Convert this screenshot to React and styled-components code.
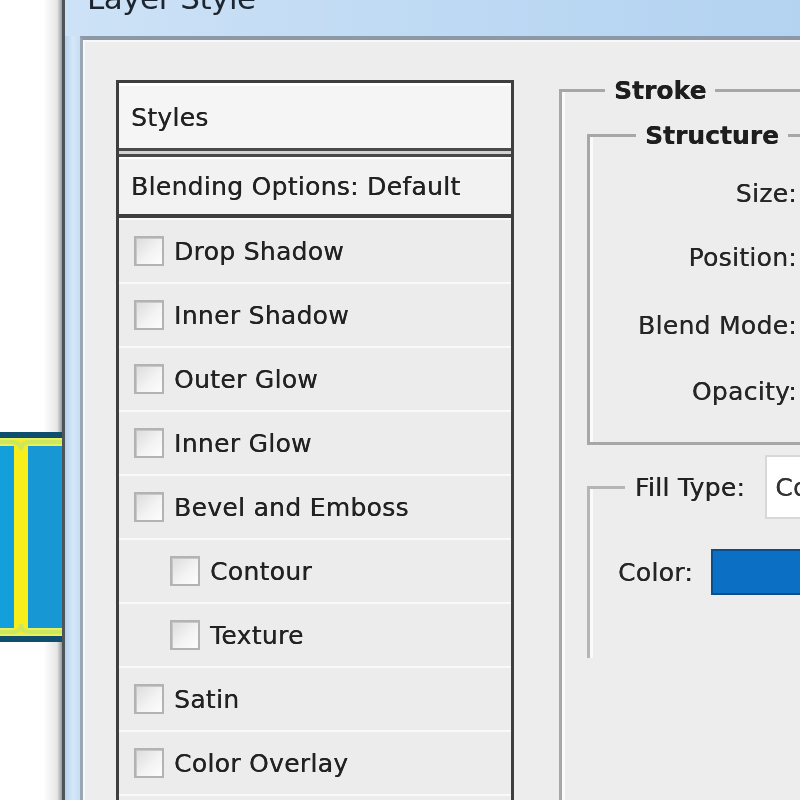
import React from 'react';
import styled, { createGlobalStyle } from 'styled-components';

const GlobalStyle = createGlobalStyle`
  html, body {
    margin: 0;
    padding: 0;
    background: #ffffff;
  }
  body {
    font-family: "DejaVu Sans", "Liberation Sans", sans-serif;
  }
`;

const effects = [
  { name: 'Drop Shadow' },
  { name: 'Inner Shadow' },
  { name: 'Outer Glow' },
  { name: 'Inner Glow' },
  { name: 'Bevel and Emboss' },
  { name: 'Contour', nested: true },
  { name: 'Texture', nested: true },
  { name: 'Satin' },
  { name: 'Color Overlay' },
];

const structureFields = [
  { label: 'Size:', height: 64 },
  { label: 'Position:', height: 64 },
  { label: 'Blend Mode:', height: 72 },
  { label: 'Opacity:', height: 60 },
];

const LayerThumb = () => (
  <svg width="62" height="210" viewBox="0 0 62 210">
    <rect x="0" y="0" width="62" height="210" fill="#0e4f6e" />
    <rect x="0" y="6" width="62" height="198" fill="#e8f05a" />
    <rect x="0" y="14" width="14" height="182" fill="#129fdc" />
    <rect x="28" y="14" width="34" height="182" fill="#1797d4" />
    <rect x="14" y="8" width="14" height="194" fill="#f7ee1c" />
    <path d="M0 10 H12 Q21 10 21 18 Q21 10 30 10 H62" stroke="#cde85e" strokeWidth="4" fill="none" />
    <path d="M0 200 H12 Q21 200 21 192 Q21 200 30 200 H62" stroke="#cde85e" strokeWidth="4" fill="none" />
  </svg>
);

const App = () => {
  return (
    <>
      <GlobalStyle />
      <Page>
        <Backdrop>
          <LayerThumb />
        </Backdrop>
        <Window>
          <TitleBar>
            <Title>Layer Style</Title>
          </TitleBar>
          <Body>
            <StylesPanel>
              <HeaderRow>Styles</HeaderRow>
              <DoubleRule />
              <BlendRow>Blending Options: Default</BlendRow>
              <Rule />
              {effects.map((fx) => (
                <EffectRow key={fx.name} $nested={fx.nested}>
                  <Checkbox />
                  <span>{fx.name}</span>
                </EffectRow>
              ))}
              <EffectRow />
            </StylesPanel>
            <RightColumn>
              <Group>
                <StrokeLegend>Stroke</StrokeLegend>
                <Structure>
                  <StructureLegend>Structure</StructureLegend>
                  {structureFields.map((f) => (
                    <FieldRow key={f.label} $height={f.height}>
                      {f.label}
                    </FieldRow>
                  ))}
                </Structure>
                <FillGroup>
                  <FillLegend>
                    <span>Fill Type:</span>
                    <Select>Co</Select>
                  </FillLegend>
                  <ColorRow>
                    <span>Color:</span>
                    <Swatch />
                  </ColorRow>
                </FillGroup>
              </Group>
            </RightColumn>
          </Body>
        </Window>
      </Page>
    </>
  );
};

export default App;

const Page = styled.div`
  display: flex;
  width: 800px;
  height: 800px;
  overflow: hidden;
  background: #ffffff;
  filter: blur(0.7px);
`;

const Backdrop = styled.div`
  width: 62px;
  flex-shrink: 0;
  padding-top: 432px;
  background: linear-gradient(to right, #ffffff 0%, #ffffff 70%, #e6e6e6 92%, #9a9a9a 100%);
  svg { display: block; }
`;

const Window = styled.div`
  flex: 1;
  display: flex;
  flex-direction: column;
  min-width: 0;
  min-height: 0;
  border-left: 3px solid #4f5459;
  background: linear-gradient(to right, #b4d2ee 0px, #d6e8f8 8px, #c2dbf3 16px);
  padding-left: 15px;
`;

const TitleBar = styled.div`
  height: 36px;
  flex-shrink: 0;
  display: flex;
  align-items: flex-end;
  overflow: hidden;
  background: linear-gradient(to right, #cde2f6 0%, #bcd8f3 60%, #b3d3f1 100%);
  margin-left: -15px;
  padding-left: 22px;
`;

const Title = styled.div`
  font-size: 31px;
  color: #1c2530;
  line-height: 1;
  margin-bottom: 22px;
  letter-spacing: -0.5px;
`;

const Body = styled.div`
  flex: 1;
  min-height: 0;
  overflow: hidden;
  display: flex;
  align-items: flex-start;
  background: #ededed;
  border-top: 4px solid #8c98a6;
  border-left: 3px solid #9aa6b4;
  box-shadow: inset 2px 2px 0 #f8f8f8;
  padding: 36px 0 0 33px;
  min-width: 0;
  text-shadow: 0.3px 0 0 currentColor;
`;

const StylesPanel = styled.div`
  width: 392px;
  flex-shrink: 0;
  margin-top: 4px;
  border: 3px solid #3e3e3e;
  background: #efefef;
  color: #222222;
  font-size: 25px;
  letter-spacing: 0.3px;
`;

const HeaderRow = styled.div`
  height: 62px;
  display: flex;
  align-items: center;
  padding-left: 12px;
  background: #f5f5f5;
  border-top: 3px solid #ffffff;
`;

const DoubleRule = styled.div`
  height: 3px;
  background: #d4d4d4;
  border-top: 3px solid #4a4a4a;
  border-bottom: 3px solid #4a4a4a;
`;

const BlendRow = styled.div`
  height: 55px;
  display: flex;
  align-items: center;
  padding-left: 12px;
  background: #f2f2f2;
  border-top: 2px solid #ffffff;
`;

const Rule = styled.div`
  height: 4px;
  background: #3e3e3e;
`;

const EffectRow = styled.div`
  height: 62px;
  display: flex;
  align-items: center;
  gap: 10px;
  padding-left: ${(p) => (p.$nested ? '51px' : '15px')};
  border-top: 2px solid #f9f9f9;
  background: #ececec;
`;

const Checkbox = styled.div`
  width: 26px;
  height: 26px;
  flex-shrink: 0;
  border: 2px solid #b3b3b3;
  background: linear-gradient(135deg, #dcdcdc 0%, #f4f4f4 60%, #fdfdfd 100%);
  box-shadow: inset 1px 1px 0 #c8c8c8;
`;

const RightColumn = styled.div`
  flex: 1;
  min-width: 0;
  margin-left: 45px;
`;

const Group = styled.fieldset`
  margin: 0;
  padding: 0 0 400px 25px;
  width: 320px;
  border: 3px solid #a7a7a7;
  border-right: none;
  box-shadow: inset 3px 0 0 #fafafa;
`;

const LegendBase = styled.legend`
  font-weight: bold;
  font-size: 25px;
  color: #1e1e1e;
  padding: 0 9px;
`;

const StrokeLegend = styled(LegendBase)`
  margin-left: 18px;
`;

const Structure = styled.fieldset`
  margin: 16px 0 0 0;
  padding: 11px 0 21px 0;
  width: 260px;
  border: 3px solid #a7a7a7;
  border-right: none;
  box-shadow: inset 3px 0 0 #fafafa;
`;

const StructureLegend = styled(LegendBase)`
  margin-left: 46px;
`;

const FieldRow = styled.div`
  height: ${(p) => p.$height}px;
  width: 207px;
  display: flex;
  align-items: center;
  justify-content: flex-end;
  font-size: 25px;
  letter-spacing: 0.3px;
  color: #262626;
`;

const FillGroup = styled.fieldset`
  margin: 10px 0 0 0;
  padding: 0 0 0 28px;
  width: 240px;
  height: 200px;
  border: 3px solid #b5b5b5;
  border-right: none;
  border-bottom: none;
  box-shadow: inset 3px 0 0 #fafafa;
`;

const FillLegend = styled.legend`
  display: flex;
  align-items: center;
  gap: 20px;
  margin-left: 7px;
  padding: 0 0 0 10px;
  font-size: 25px;
  letter-spacing: 0.3px;
  color: #222222;
`;

const Select = styled.div`
  width: 60px;
  height: 60px;
  display: flex;
  align-items: center;
  padding-left: 8px;
  background: #ffffff;
  border: 2px solid #d8d8d8;
  font-size: 25px;
  color: #333333;
`;

const ColorRow = styled.div`
  display: flex;
  align-items: center;
  gap: 18px;
  margin-top: 30px;
  font-size: 25px;
  letter-spacing: 0.3px;
  color: #262626;
`;

const Swatch = styled.div`
  width: 120px;
  height: 42px;
  background: #0b6fc3;
  border: 2px solid #0a4f8c;
`;
